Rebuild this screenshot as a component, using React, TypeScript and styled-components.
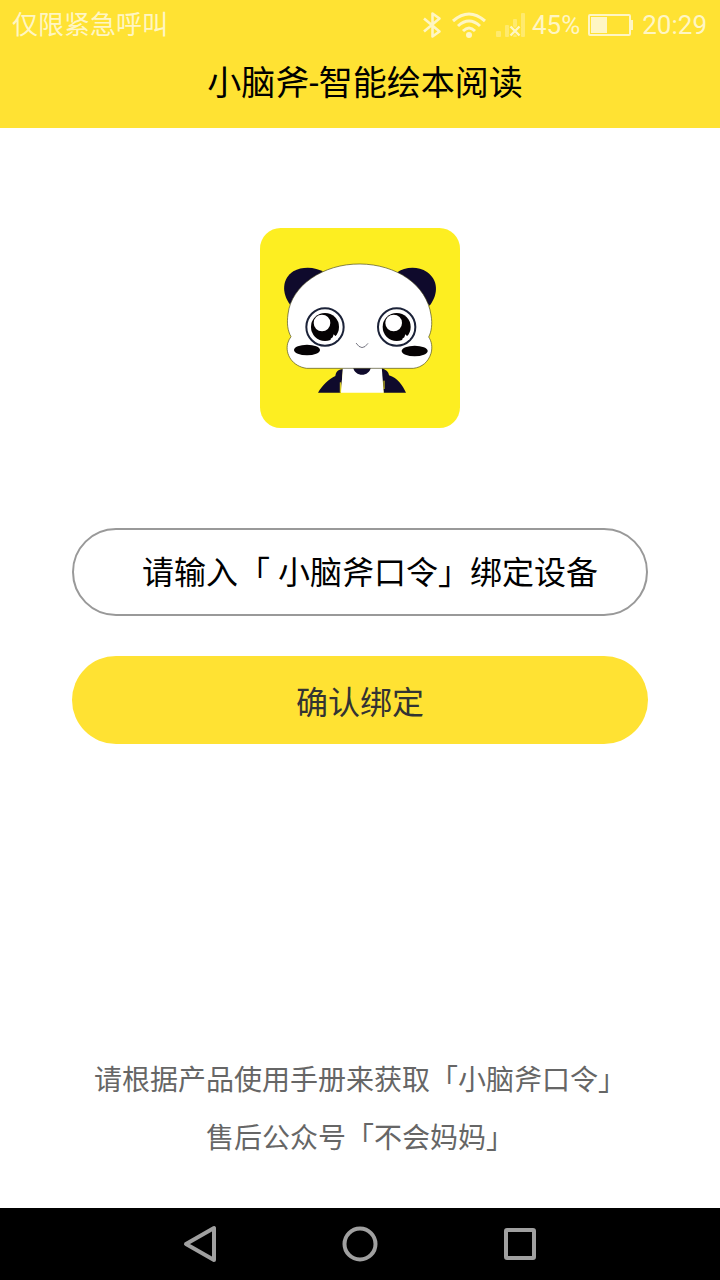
import React from "react";
import styled, { createGlobalStyle } from "styled-components";

const GlobalStyle = createGlobalStyle`
  *, *::before, *::after { box-sizing: border-box; }
  body {
    margin: 0;
    background: #fff;
    color: #000;
    font-family: Roboto, "Noto Sans CJK SC", sans-serif;
  }
  button, input { font: inherit; }
`;

const Screen = styled.div`
  display: flex;
  flex-direction: column;
  min-height: 100vh;
`;

const Header = styled.header`
  background: #ffe233;
`;

const StatusBar = styled.div`
  display: flex;
  align-items: center;
  justify-content: space-between;
  height: 48px;
  padding: 1px 13px 0 12px;
  color: #fff6c4;
  font-size: 26px;
  line-height: 48px;
`;

const StatusIcons = styled.div`
  display: flex;
  align-items: center;
  gap: 10px;
`;

const Battery = styled.span`
  display: flex;
  align-items: center;
  gap: 8px;
  margin-left: -4px;
`;

const Title = styled.h1`
  margin: 0;
  padding: 0 0 10px 10px;
  font-size: 34px;
  font-weight: 400;
  line-height: 70px;
  text-align: center;
`;

const Main = styled.main`
  flex: 1;
  display: flex;
  flex-direction: column;
  align-items: center;
  padding: 100px 10% 40px;
`;

const Logo = styled.svg`
  width: 200px;
  height: 200px;
`;

const BindForm = styled.form`
  display: flex;
  flex-direction: column;
  gap: 40px;
  width: 100%;
  margin-top: 100px;
`;

const CodeInput = styled.input`
  width: 100%;
  height: 88px;
  padding: 2px 0 0 20px;
  border: 2px solid #999;
  border-radius: 44px;
  background: #fff;
  font-size: 32px;
  text-align: center;
  outline: none;
  &::placeholder { color: #000; opacity: 1; }
`;

const SubmitButton = styled.button`
  height: 88px;
  padding: 0;
  border: 0;
  border-radius: 44px;
  background: #ffe233;
  color: #333;
  font-size: 32px;
`;

const Notes = styled.footer`
  margin-top: auto;
  color: #666;
  font-size: 28px;
  line-height: 58px;
  text-align: center;
`;

const Note = styled.p`
  margin: 0;
`;

const NavBar = styled.nav`
  display: flex;
  justify-content: center;
  gap: 88px;
  height: 72px;
  background: #000;
`;

const NavButton = styled.button`
  display: flex;
  align-items: center;
  justify-content: center;
  width: 72px;
  height: 72px;
  padding: 0;
  border: 0;
  background: none;
  color: #a0a0a0;
`;

const BluetoothIcon = () => (
  <svg width="20" height="28" viewBox="0 0 20 28" fill="none" stroke="currentColor" strokeWidth="2.6">
    <path d="M2 7.500 17.500 20.500 10.500 25.500V2.500L17.500 7.500 2 20.500" strokeLinejoin="round" />
  </svg>
);

const WifiIcon = () => (
  <svg width="34" height="26" viewBox="0 0 34 26" fill="none" stroke="currentColor" strokeWidth="3">
    <path d="M1 9Q17-5 33 9M6 14Q17 4 28 14M11 19Q17 13 23 19" />
    <circle cx="17" cy="23" r="3" fill="currentColor" stroke="none" />
  </svg>
);

const SignalIcon = () => (
  <svg width="30" height="26" viewBox="0 0 30 26" fill="currentColor">
    <g opacity=".4">
      <rect y="19" width="5" height="6" rx="1" />
      <rect x="9" y="13" width="4" height="12" rx="1" />
      <rect x="17" y="7" width="4" height="18" rx="1" />
      <rect x="25" y="1" width="4" height="24" rx="1" />
    </g>
    <path d="m14 14 10 10m0-10-10 10" fill="none" stroke="#ffe233" strokeWidth="4" />
    <path d="m14.500 14.500 9 9m0-9-9 9" fill="none" stroke="currentColor" strokeWidth="2.4" />
  </svg>
);

const BatteryIcon = () => (
  <svg width="46" height="24" viewBox="0 0 46 24">
    <rect x="1" y="2" width="41" height="20" rx="1" fill="none" stroke="currentColor" strokeWidth="2" />
    <rect x="3" y="4" width="16" height="16" fill="currentColor" />
    <path d="M42 7h3v10h-3z" fill="currentColor" />
  </svg>
);

const Eye = ({ x }: { x: number }) => (
  <g transform={`translate(${x} 312)`}>
    <circle r="56" fill="#fff" stroke="#1b2238" strokeWidth="6" />
    <circle r="42" fill="#050203" />
    <circle cx="-9" cy="-12" r="25" fill="#fff" />
    <path d="M17 42V35L23 31 26 22 31 27 38 24V38Z" fill="#fff" />
  </g>
);

const PandaLogo = () => (
  <Logo viewBox="15 15 600 600" role="img" aria-label="小脑斧">
    <rect x="15" y="15" width="600" height="600" rx="62" fill="#fdee21" />
    <g fill="#0f0a2c">
      <path d="M106 246C78 210 82 166 115 145C144 129 183 132 206 148L155 200Z" />
      <path d="M524 248C552 212 549 170 516 147C487 128 449 132 425 149L480 200Z" />
      <path d="M189 509C203 486 222 468 241 459C243 446 249 439 264 439L257 509Z" />
      <path d="M378 436C392 438 401 447 402 457C428 465 443 488 453 509H386Z" />
    </g>
    <path d="M264 430H380L386 509H258Z" fill="#fff" />
    <path d="M256 478V509M387 473V498" fill="none" stroke="#fdee21" strokeWidth="3" />
    <path d="M294 432H348C343 463 299 463 294 432Z" fill="#0f0a2c" />
    <path
      d="M155 436C112 430 90 394 98 361C100 353 104 347 108 341C98 323 95 302 99 273C109 188 204 122 315 123C424 124 515 185 528 276C533 303 529 327 521 342C530 355 533 373 528 391C520 417 501 433 475 436Z"
      fill="#fff"
      stroke="#4a4820"
      strokeWidth="2"
    />
    <Eye x={210} />
    <Eye x={425} />
    <ellipse cx="156" cy="381" rx="39" ry="16" fill="#050203" />
    <ellipse cx="479" cy="384" rx="39" ry="16" fill="#050203" />
    <path d="M303 360Q321 387 339 361" fill="none" stroke="#333344" strokeWidth="2" />
  </Logo>
);

export default function App() {
  return (
    <Screen>
      <GlobalStyle />
      <Header>
        <StatusBar>
          <span>仅限紧急呼叫</span>
          <StatusIcons>
            <BluetoothIcon />
            <WifiIcon />
            <SignalIcon />
            <Battery>
              <span>45%</span>
              <BatteryIcon />
              <span>20:29</span>
            </Battery>
          </StatusIcons>
        </StatusBar>
        <Title>小脑斧-智能绘本阅读</Title>
      </Header>
      <Main>
        <PandaLogo />
        <BindForm onSubmit={(e) => e.preventDefault()}>
          <CodeInput aria-label="小脑斧口令" placeholder="请输入「 小脑斧口令」绑定设备" />
          <SubmitButton type="submit">确认绑定</SubmitButton>
        </BindForm>
        <Notes>
          <Note>请根据产品使用手册来获取「小脑斧口令」</Note>
          <Note>售后公众号「不会妈妈」</Note>
        </Notes>
      </Main>
      <NavBar>
        <NavButton aria-label="返回">
          <svg width="36" height="40" viewBox="0 0 36 40" fill="none" stroke="currentColor" strokeWidth="4" strokeLinejoin="round">
            <path d="M4 20 32 4v32z" />
          </svg>
        </NavButton>
        <NavButton aria-label="主屏幕">
          <svg width="36" height="36" viewBox="0 0 36 36" fill="none" stroke="currentColor" strokeWidth="4">
            <circle cx="18" cy="18" r="15.500" />
          </svg>
        </NavButton>
        <NavButton aria-label="最近任务">
          <svg width="32" height="32" viewBox="0 0 32 32" fill="none" stroke="currentColor" strokeWidth="4">
            <rect x="2" y="2" width="28" height="28" rx="1" />
          </svg>
        </NavButton>
      </NavBar>
    </Screen>
  );
}
